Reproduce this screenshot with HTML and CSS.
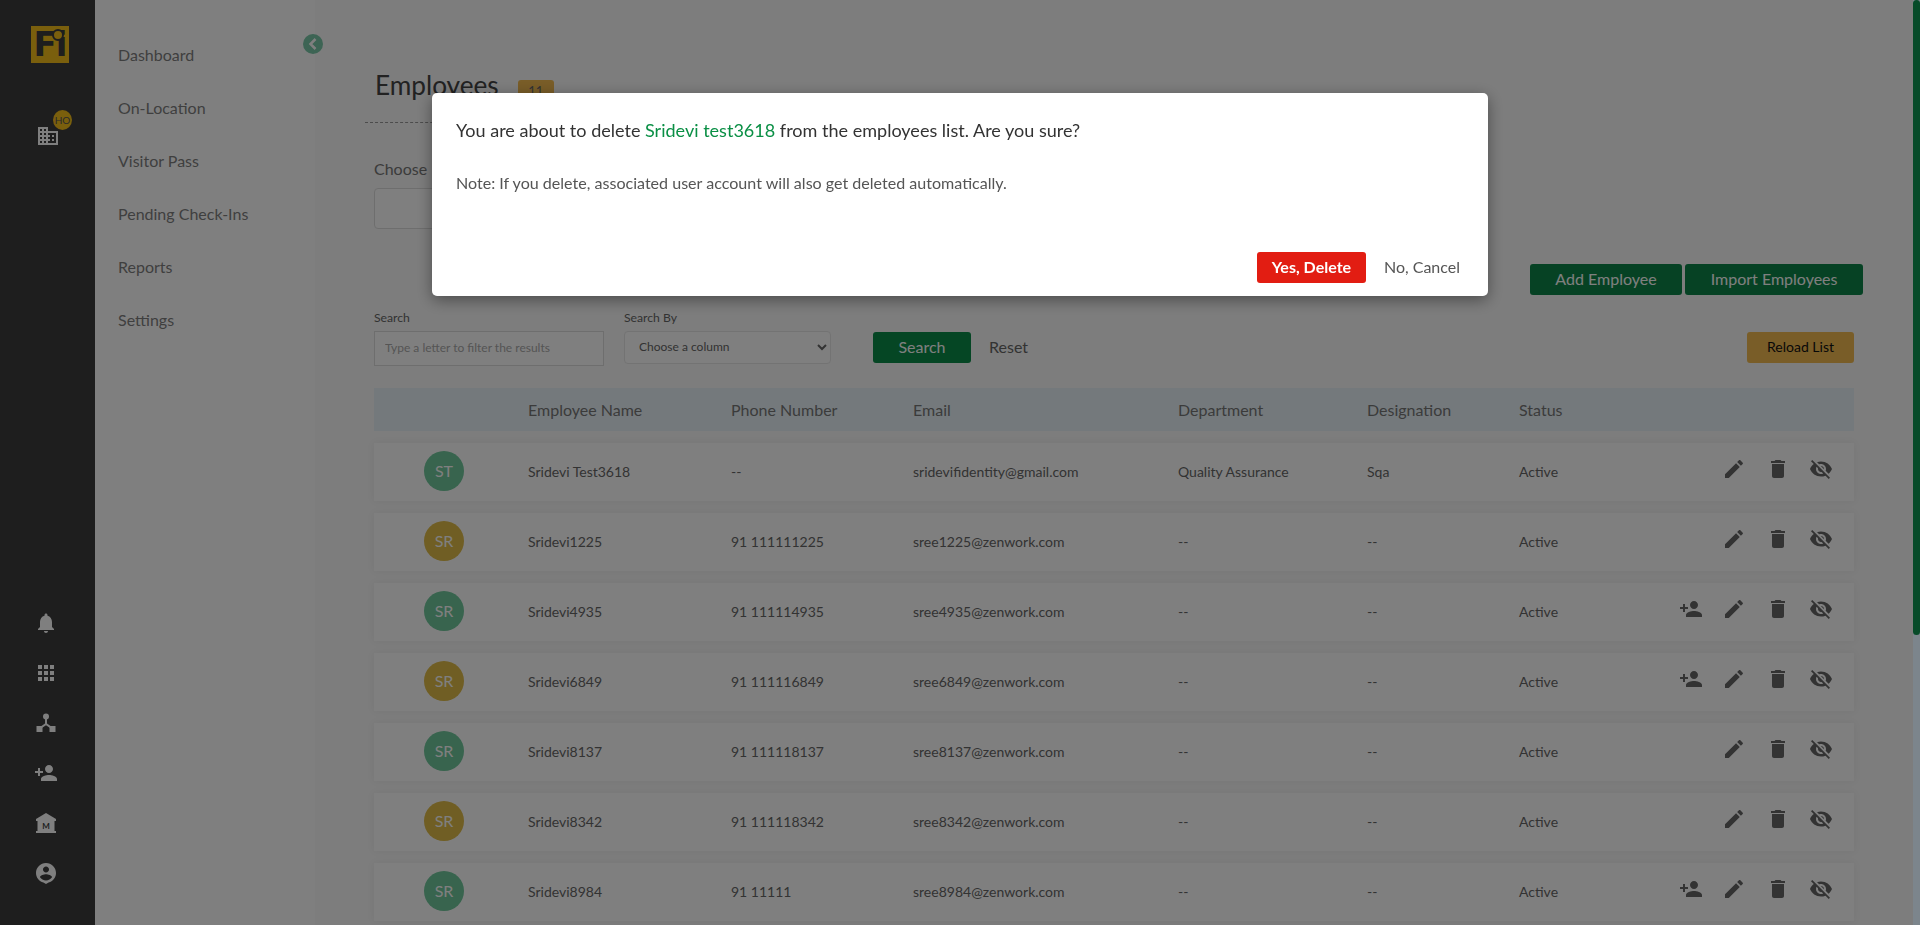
FILE: index.html
```html
<!DOCTYPE html>
<html lang="en">
<head>
  <meta charset="UTF-8">
  <meta name="viewport" content="width=device-width, initial-scale=1.0">
  <title>Employees</title>
  <link rel="stylesheet" href="styles.css">
</head>
<body>
  <svg class="icon-defs" aria-hidden="true">
    <symbol id="i-domain" viewBox="0 0 24 24"><path d="M12 7V3H2v18h20V7H12zM6 19H4v-2h2v2zm0-4H4v-2h2v2zm0-4H4V9h2v2zm0-4H4V5h2v2zm4 12H8v-2h2v2zm0-4H8v-2h2v2zm0-4H8V9h2v2zm0-4H8V5h2v2zm10 12h-8v-2h2v-2h-2v-2h2v-2h-2V9h8v10zm-2-8h-2v2h2v-2zm0 4h-2v2h2v-2z"/></symbol>
    <symbol id="i-bell" viewBox="0 0 24 24"><path d="M12 22c1.1 0 2-.9 2-2h-4c0 1.1.89 2 2 2zm6-6v-5c0-3.07-1.64-5.64-4.5-6.32V4c0-.83-.67-1.5-1.5-1.5s-1.5.67-1.5 1.5v.68C7.63 5.36 6 7.92 6 11v5l-2 2v1h16v-1l-2-2z"/></symbol>
    <symbol id="i-apps" viewBox="0 0 24 24"><path d="M4 8h4V4H4v4zm6 12h4v-4h-4v4zm-6 0h4v-4H4v4zm0-6h4v-4H4v4zm6 0h4v-4h-4v4zm6-10v4h4V4h-4zm-6 4h4V4h-4v4zm6 6h4v-4h-4v4zm0 6h4v-4h-4v4z"/></symbol>
    <symbol id="i-hub" viewBox="0 0 24 24"><circle cx="12" cy="5.500" r="3"/><rect x="2.500" y="15" width="6" height="6"/><rect x="15.500" y="15" width="6" height="6"/><path d="M11 8h2v4.400l5 3.600-1.200 1.600L12 14.200l-4.800 3.400L6 16l5-3.600z"/></symbol>
    <symbol id="i-person-add" viewBox="0 0 24 24"><path d="M15 12c2.210 0 4-1.790 4-4s-1.790-4-4-4-4 1.790-4 4 1.790 4 4 4zm-9-2V7H4v3H1v2h3v3h2v-3h3v-2H6zm9 4c-2.670 0-8 1.340-8 4v2h16v-2c0-2.660-5.330-4-8-4z"/></symbol>
    <symbol id="i-account" viewBox="0 0 24 24"><path d="M12 2C6.480 2 2 6.480 2 12c0 4.600 3.100 8.500 7.400 9.600L12 23l2.600-1.400C18.900 20.500 22 16.600 22 12c0-5.520-4.480-10-10-10zm0 3.500c1.660 0 3 1.340 3 3s-1.340 3-3 3-3-1.340-3-3 1.340-3 3-3zm0 14c-2.500 0-4.710-1.280-6-3.220.030-1.990 4-3.080 6-3.080 1.990 0 5.970 1.090 6 3.080-1.290 1.940-3.500 3.220-6 3.220z"/></symbol>
    <symbol id="i-edit" viewBox="0 0 24 24"><path d="M3 17.250V21h3.750L17.810 9.940l-3.750-3.750L3 17.250zM20.710 7.040c.39-.39.39-1.020 0-1.410l-2.340-2.340c-.39-.39-1.020-.39-1.410 0l-1.830 1.830 3.750 3.750 1.830-1.830z"/></symbol>
    <symbol id="i-delete" viewBox="0 0 24 24"><path d="M6 19c0 1.100.9 2 2 2h8c1.100 0 2-.9 2-2V7H6v12zM19 4h-3.500l-1-1h-5l-1 1H5v2h14V4z"/></symbol>
    <symbol id="i-eye-off" viewBox="0 0 24 24"><path d="M12 7c2.760 0 5 2.240 5 5 0 .65-.13 1.260-.36 1.830l2.920 2.920c1.510-1.260 2.700-2.890 3.430-4.750-1.730-4.390-6-7.500-11-7.500-1.400 0-2.740.25-3.980.7l2.160 2.160C10.740 7.130 11.350 7 12 7zM2 4.270l2.280 2.280.46.46C3.080 8.300 1.780 10.020 1 12c1.730 4.390 6 7.500 11 7.500 1.550 0 3.030-.3 4.380-.84l.42.42L19.730 22 21 20.730 3.270 3 2 4.270zM7.530 9.800l1.550 1.550c-.05.21-.08.43-.08.65 0 1.660 1.340 3 3 3 .22 0 .44-.03.65-.08l1.550 1.550c-.67.33-1.410.53-2.200.53-2.760 0-5-2.240-5-5 0-.79.2-1.530.53-2.200zm4.310-.78l3.150 3.150.02-.16c0-1.660-1.340-3-3-3l-.17.01z"/></symbol>
  </svg>

  <div class="page">
    <aside class="rail">
      <div class="logo">Fi</div>
      <div class="org">
        <span class="org-badge">HO</span>
        <svg class="icon"><use href="#i-domain"/></svg>
      </div>
      <div class="rail-bottom">
        <svg class="icon"><use href="#i-bell"/></svg>
        <svg class="icon"><use href="#i-apps"/></svg>
        <svg class="icon"><use href="#i-hub"/></svg>
        <svg class="icon"><use href="#i-person-add"/></svg>
        <svg class="icon" viewBox="0 0 24 24">
          <path d="M12 2 2 8v2h20V8z"/>
          <path d="M3.500 10h17v10h-17zM2 20h20v2H2z"/>
          <text class="bank-letter" x="12" y="18">M</text>
        </svg>
        <svg class="icon"><use href="#i-account"/></svg>
      </div>
    </aside>

    <nav class="subnav">
      <button class="collapse" aria-label="Collapse">
        <svg viewBox="0 0 20 20"><path d="M12.500 5 7.500 10l5 5" fill="none" stroke="#fff" stroke-width="2.500"/></svg>
      </button>
      <a href="#">Dashboard</a>
      <a href="#">On-Location</a>
      <a href="#">Visitor Pass</a>
      <a href="#">Pending Check-Ins</a>
      <a href="#">Reports</a>
      <a href="#">Settings</a>
    </nav>

    <main class="content">
      <div class="title-bar">
        <h1>Employees</h1>
        <span class="count">11</span>
      </div>

      <label class="choose-label">Choose</label>
      <div class="choose-box"></div>

      <div class="top-actions">
        <button class="btn btn-green">Add Employee</button>
        <button class="btn btn-green">Import Employees</button>
      </div>

      <div class="filters">
        <div class="field field-search">
          <label>Search</label>
          <input type="text" placeholder="Type a letter to filter the results">
        </div>
        <div class="field field-by">
          <label>Search By</label>
          <select><option>Choose a column</option></select>
        </div>
        <button class="btn btn-search">Search</button>
        <a class="reset" href="#">Reset</a>
        <button class="btn btn-reload">Reload List</button>
      </div>

      <div class="table">
        <div class="row head">
          <span></span><span>Employee Name</span><span>Phone Number</span><span>Email</span><span>Department</span><span>Designation</span><span>Status</span><span></span>
        </div>

        <div class="row item">
          <span class="avatar green">ST</span><span>Sridevi Test3618</span><span>--</span><span>sridevifidentity@gmail.com</span><span>Quality Assurance</span><span>Sqa</span><span>Active</span>
          <span class="actions">
            <svg class="icon"><use href="#i-edit"/></svg><svg class="icon"><use href="#i-delete"/></svg><svg class="icon"><use href="#i-eye-off"/></svg>
          </span>
        </div>
        <div class="row item">
          <span class="avatar gold">SR</span><span>Sridevi1225</span><span>91 111111225</span><span>sree1225@zenwork.com</span><span>--</span><span>--</span><span>Active</span>
          <span class="actions">
            <svg class="icon"><use href="#i-edit"/></svg><svg class="icon"><use href="#i-delete"/></svg><svg class="icon"><use href="#i-eye-off"/></svg>
          </span>
        </div>
        <div class="row item">
          <span class="avatar green">SR</span><span>Sridevi4935</span><span>91 111114935</span><span>sree4935@zenwork.com</span><span>--</span><span>--</span><span>Active</span>
          <span class="actions">
            <svg class="icon"><use href="#i-person-add"/></svg><svg class="icon"><use href="#i-edit"/></svg><svg class="icon"><use href="#i-delete"/></svg><svg class="icon"><use href="#i-eye-off"/></svg>
          </span>
        </div>
        <div class="row item">
          <span class="avatar gold">SR</span><span>Sridevi6849</span><span>91 111116849</span><span>sree6849@zenwork.com</span><span>--</span><span>--</span><span>Active</span>
          <span class="actions">
            <svg class="icon"><use href="#i-person-add"/></svg><svg class="icon"><use href="#i-edit"/></svg><svg class="icon"><use href="#i-delete"/></svg><svg class="icon"><use href="#i-eye-off"/></svg>
          </span>
        </div>
        <div class="row item">
          <span class="avatar green">SR</span><span>Sridevi8137</span><span>91 111118137</span><span>sree8137@zenwork.com</span><span>--</span><span>--</span><span>Active</span>
          <span class="actions">
            <svg class="icon"><use href="#i-edit"/></svg><svg class="icon"><use href="#i-delete"/></svg><svg class="icon"><use href="#i-eye-off"/></svg>
          </span>
        </div>
        <div class="row item">
          <span class="avatar gold">SR</span><span>Sridevi8342</span><span>91 111118342</span><span>sree8342@zenwork.com</span><span>--</span><span>--</span><span>Active</span>
          <span class="actions">
            <svg class="icon"><use href="#i-edit"/></svg><svg class="icon"><use href="#i-delete"/></svg><svg class="icon"><use href="#i-eye-off"/></svg>
          </span>
        </div>
        <div class="row item">
          <span class="avatar green">SR</span><span>Sridevi8984</span><span>91 11111</span><span>sree8984@zenwork.com</span><span>--</span><span>--</span><span>Active</span>
          <span class="actions">
            <svg class="icon"><use href="#i-person-add"/></svg><svg class="icon"><use href="#i-edit"/></svg><svg class="icon"><use href="#i-delete"/></svg><svg class="icon"><use href="#i-eye-off"/></svg>
          </span>
        </div>
      </div>
    </main>
  </div>

  <div class="backdrop"></div>

  <div class="scrollbar"><div class="scrollbar-thumb"></div></div>

  <div class="modal-wrap">
    <div class="modal">
      <p class="modal-title">You are about to delete <span class="modal-name">Sridevi test3618</span> from the employees list. Are you sure?</p>
      <p class="modal-note">Note: If you delete, associated user account will also get deleted automatically.</p>
      <div class="modal-footer">
        <button class="btn btn-delete">Yes, Delete</button>
        <a class="cancel" href="#">No, Cancel</a>
      </div>
    </div>
  </div>
</body>
</html>
```

FILE: styles.css
```css
* {
  box-sizing: border-box;
}

html, body {
  height: 100%;
  overflow: hidden;
}

body {
  margin: 0;
  font-family: Lato, "Open Sans", sans-serif;
  font-size: 14px;
  color: #666;
  background-color: #fafafa;
}

a {
  color: inherit;
  text-decoration: none;
}

.icon-defs {
  display: none;
}

.icon {
  display: block;
  width: 24px;
  height: 24px;
  fill: currentColor;
  flex: none;
}

.page {
  display: grid;
  grid-template-columns: 95px 220px 1fr;
  height: 100vh;
  padding-right: 7px;
}

/* dark icon rail */
.rail {
  display: flex;
  flex-direction: column;
  align-items: flex-start;
  padding: 26px 0 40px 34px;
  background-color: #3c3c3c;
  color: #fff;
}

.logo {
  position: relative;
  width: 38px;
  height: 37px;
  margin-left: -3px;
  background-color: #f4be1a;
  color: #3c3c3c;
  font-family: "DejaVu Sans", sans-serif;
  font-size: 34px;
  font-weight: bold;
  line-height: 37px;
  text-align: center;
  letter-spacing: -1px;
}

.logo::after {
  content: "";
  position: absolute;
  top: 3px;
  right: 5px;
  width: 8px;
  height: 8px;
  border: 2px solid #3c3c3c;
  border-radius: 50%;
  background-color: #f4be1a;
}

.org {
  position: relative;
  margin: 61px 0 0 2px;
}

.org-badge {
  position: absolute;
  top: -14px;
  left: 17px;
  width: 19px;
  height: 20px;
  border-radius: 50%;
  background-color: #f4be1a;
  color: #555;
  font-size: 10px;
  line-height: 20px;
  text-align: center;
}

.rail-bottom {
  display: flex;
  flex-direction: column;
  gap: 26px;
  margin-top: auto;
}

.bank-letter {
  font-family: Lato, sans-serif;
  font-size: 8px;
  font-weight: bold;
  fill: #3c3c3c;
  text-anchor: middle;
}

/* text menu */
.subnav {
  position: relative;
  display: flex;
  flex-direction: column;
  padding: 28px 0 0 23px;
  background-color: #fff;
}

.subnav a {
  font-size: 16px;
  line-height: 53px;
  color: #7e7e7e;
}

.collapse {
  position: absolute;
  top: 34px;
  right: -8px;
  width: 20px;
  height: 20px;
  padding: 0;
  border: none;
  border-radius: 50%;
  background-color: #7ac8a8;
}

.collapse svg {
  display: block;
}

/* main column */
.content {
  padding: 66px 59px 0;
}

.title-bar {
  display: flex;
  align-items: flex-start;
  max-width: 800px;
  margin-left: -9px;
  padding: 0 0 18px 10px;
  border-bottom: 1px dashed #999;
}

.title-bar h1 {
  margin: 0;
  font-size: 26.200px;
  font-weight: 400;
  line-height: 38px;
  color: #444;
}

.count {
  margin: 14px 0 0 19px;
  width: 36px;
  height: 22px;
  border-radius: 3px;
  background-color: #f2ba50;
  color: #666;
  font-size: 13px;
  line-height: 22px;
  text-align: center;
}

.choose-label {
  display: block;
  margin-top: 36px;
  font-size: 16px;
  line-height: 20px;
  color: #777;
}

.choose-box {
  width: 400px;
  height: 41px;
  margin-top: 9px;
  border: 1px solid #ddd;
  border-radius: 4px;
  background-color: #fff;
}

.top-actions {
  display: flex;
  justify-content: flex-end;
  gap: 3px;
  margin: 35px -9px 0 0;
}

.btn {
  height: 31px;
  padding: 0 0 2px;
  border: none;
  border-radius: 3px;
  font-family: inherit;
  font-size: 16px;
  color: #fff;
}

.btn-green {
  padding: 0 25.500px 2px;
  background-color: #0c8548;
}

.filters {
  display: flex;
  align-items: flex-start;
  margin-top: 15px;
  height: 56px;
}

.field label {
  display: block;
  height: 21px;
  font-size: 12.200px;
  line-height: 16px;
  color: #666;
}

.field-search {
  width: 230px;
}

.field-search input {
  width: 100%;
  height: 35px;
  padding: 0 10px 2px;
  border: 1px solid #ddd;
  background-color: #fff;
  font-family: inherit;
  font-size: 12px;
}

.field-search input::placeholder {
  color: #aaa;
}

.field-by {
  width: 207px;
  margin-left: 20px;
}

.field-by select {
  width: 100%;
  height: 33px;
  padding: 0 10px 2px;
  border: 1px solid #e6e6e6;
  border-radius: 4px;
  background-color: #fff;
  color: #666;
  font-family: inherit;
  font-size: 12px;
}

.btn-search {
  width: 98px;
  margin: 22px 0 0 42px;
  background-color: #0a8c48;
}

.reset {
  margin: 22px 0 0 18px;
  font-size: 16px;
  line-height: 29px;
  color: #666;
}

.btn-reload {
  width: 107px;
  margin: 22px 0 0 auto;
  background-color: #f2ba50;
  color: #111;
  font-size: 14px;
}

.table {
  display: flex;
  flex-direction: column;
  gap: 12px;
  margin-top: 22px;
}

.row {
  display: grid;
  grid-template-columns: 154px 203px 182px 265px 189px 152px 100px 1fr;
  align-items: center;
}

.head {
  height: 43px;
  background-color: #e8f3f9;
  color: #777;
  font-size: 16px;
}

.item {
  height: 58px;
  flex: none;
  padding-bottom: 2px;
  background-color: #fff;
  box-shadow: 0 0 8px rgba(0, 0, 0, 0.06);
}

.avatar {
  width: 40px;
  height: 40px;
  margin-left: 50px;
  border-radius: 50%;
  color: #fff;
  font-size: 16px;
  line-height: 40px;
  text-align: center;
}

.green {
  background-color: #70c89c;
}

.gold {
  background-color: #e0bc48;
}

.actions {
  display: flex;
  justify-content: flex-end;
  gap: 19.500px;
  padding: 0 21px 4px 0;
  color: #666;
}

/* delete dialog */
.backdrop {
  position: fixed;
  inset: 0;
  z-index: 10;
  background-color: rgba(0, 0, 0, 0.5);
}

.scrollbar {
  position: fixed;
  top: 0;
  right: 0;
  bottom: 0;
  z-index: 11;
  width: 7px;
  background-color: #7c858c;
}

.scrollbar-thumb {
  height: 635px;
  border-radius: 4px;
  background-color: #074b29;
}

.modal-wrap {
  position: fixed;
  top: 93px;
  left: 0;
  z-index: 12;
  display: flex;
  justify-content: center;
  width: 100%;
}

.modal {
  display: flex;
  flex-direction: column;
  width: 1056px;
  height: 203px;
  padding: 25px 24px 0;
  border-radius: 5px;
  background-color: #fff;
  box-shadow: 0 4px 16px rgba(0, 0, 0, 0.4);
}

.modal-title {
  margin: 0;
  font-size: 18.040px;
  line-height: 24px;
  color: #333;
}

.modal-name {
  color: #0a8f45;
}

.modal-note {
  margin: 31px 0 0;
  font-size: 16.070px;
  line-height: 20px;
  color: #555;
}

.modal-footer {
  display: flex;
  align-items: center;
  justify-content: flex-end;
  margin-top: auto;
  padding: 0 4px 13px 0;
}

.btn-delete {
  width: 109px;
  background-color: #e21d12;
  font-weight: 700;
}

.cancel {
  margin: 0 0 2px 18px;
  font-size: 16px;
  color: #555;
}
```
